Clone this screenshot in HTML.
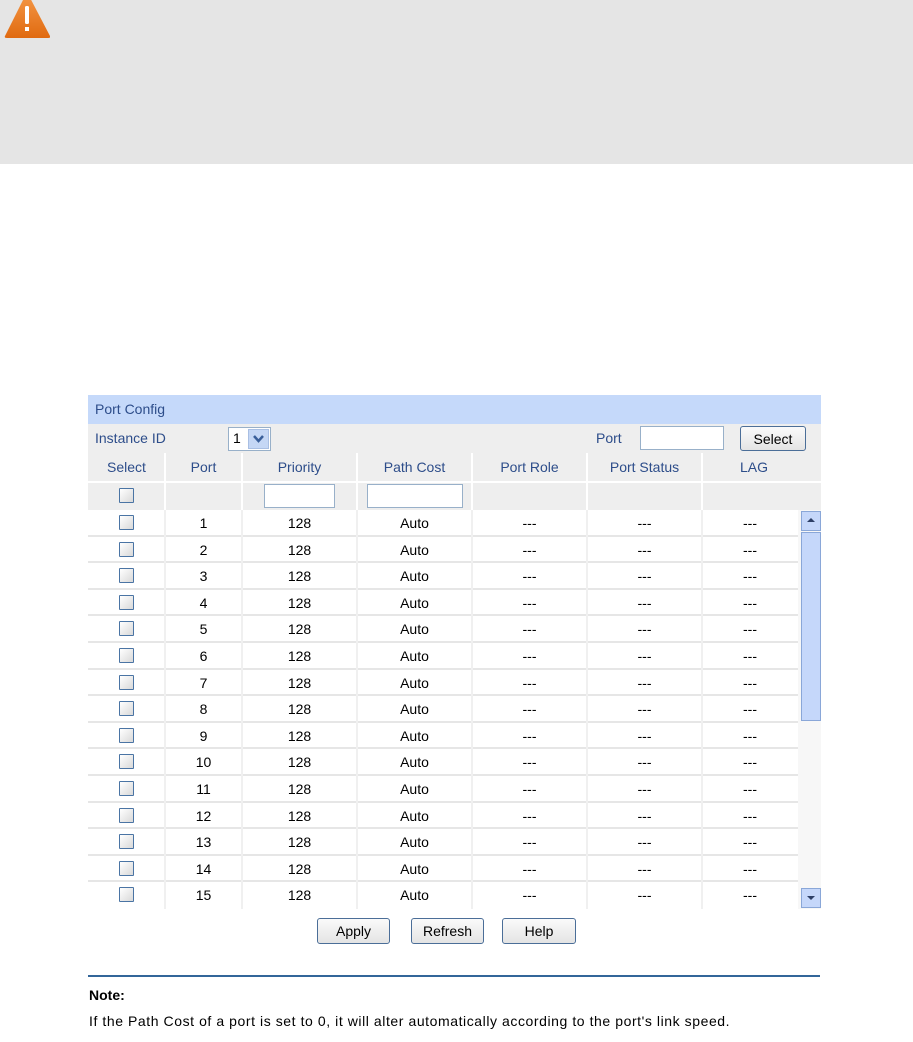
<!DOCTYPE html>
<html><head><meta charset="utf-8"><style>
*{margin:0;padding:0;box-sizing:border-box}
body{width:913px;height:1042px;background:#fff;position:relative;overflow:hidden;font-family:"Liberation Sans",Arial,sans-serif;font-size:14px;color:#000}
.a{position:absolute}
.banner{left:0;top:0;width:913px;height:164px;background:#e5e5e5}
.frame{left:88px;top:395px;width:733px;height:514px;background:#eeeeee}
.hdr{left:88px;top:395px;width:733px;height:29px;background:#c5d9fa;color:#2d4d8a;padding:6px 0 0 7px;font-size:14px}
.lbl{color:#2d4d8a;font-size:14px}
.row{position:absolute;left:88px;width:710px;height:26.6px;background:#fff;border-bottom:2px solid #e6e6e6}
.c{position:absolute;top:0;height:100%;text-align:center;line-height:26px;font-size:14px}
.cb{position:absolute;width:15px;height:15px;border:1.5px solid #4a74a4;background:linear-gradient(135deg,#fff,#d8d8d8);border-radius:1px}
.btn{position:absolute;height:26px;border:1.5px solid #4b6e98;border-radius:3px;background:linear-gradient(#fafafa,#e4e4e4);text-align:center;line-height:24px;font-size:14px}
.inp{position:absolute;background:#fff;border:1px solid #98b0c9}
</style></head><body>
<div class="a banner"></div>
<svg class="a" style="left:4px;top:0" width="46" height="40" viewBox="0 0 46 40">
<defs><linearGradient id="g" x1="0" y1="0" x2="0" y2="1"><stop offset="0" stop-color="#f59a4a"/><stop offset="1" stop-color="#e06a10"/></linearGradient></defs>
<path d="M23 -8 L46 36 Q47 38 44 38 L3 38 Q0 38 1 36 Z" fill="url(#g)"/>
<rect x="21" y="6" width="4" height="18" rx="1.5" fill="#fff"/><rect x="21" y="27" width="4" height="4" fill="#fff"/>
</svg>

<div class="a frame"></div>
<div class="a hdr">Port Config</div>
<div class="a lbl" style="left:95px;top:430px">Instance ID</div>
<div class="a" style="left:228px;top:427px;width:43px;height:24px;background:#fff;border:1px solid #98b0c9"></div>
<div class="a" style="left:233px;top:430px;font-size:14px">1</div>
<div class="a" style="left:248px;top:429px;width:21px;height:20px;background:#c5d7f5;border:1px solid #a9bfe3"></div>
<svg class="a" style="left:252px;top:434px" width="13" height="10"><path d="M2 2 L6.5 7 L11 2" stroke="#3a5f9a" stroke-width="2.5" fill="none"/></svg>
<div class="a lbl" style="left:596px;top:430px">Port</div>
<div class="inp" style="left:640px;top:426px;width:84px;height:24px"></div>
<div class="btn" style="left:740px;top:426px;width:66px;height:25px">Select</div>

<div class="a" style="left:88px;top:453px;width:733px;height:28px">
<div class="c lbl" style="left:0;width:77px;line-height:28px">Select</div>
<div class="c lbl" style="left:77px;width:77px;line-height:28px">Port</div>
<div class="c lbl" style="left:154px;width:115px;line-height:28px">Priority</div>
<div class="c lbl" style="left:269px;width:115px;line-height:28px">Path Cost</div>
<div class="c lbl" style="left:384px;width:115px;line-height:28px">Port Role</div>
<div class="c lbl" style="left:499px;width:115px;line-height:28px">Port Status</div>
<div class="c lbl" style="left:614px;width:104px;line-height:28px">LAG</div>
</div>
<div class="a" style="left:88px;top:481px;width:733px;height:2px;background:#fff"></div>
<div class="cb" style="left:119px;top:488px"></div>
<div class="inp" style="left:264px;top:484px;width:71px;height:24px"></div>
<div class="inp" style="left:367px;top:484px;width:96px;height:24px"></div>
<div class="a" style="left:164px;top:453px;width:2px;height:57px;background:#fff"></div>
<div class="a" style="left:241px;top:453px;width:2px;height:57px;background:#fff"></div>
<div class="a" style="left:356px;top:453px;width:2px;height:57px;background:#fff"></div>
<div class="a" style="left:471px;top:453px;width:2px;height:57px;background:#fff"></div>
<div class="a" style="left:586px;top:453px;width:2px;height:57px;background:#fff"></div>
<div class="a" style="left:701px;top:453px;width:2px;height:57px;background:#fff"></div>

<div id="rows">
<div class="row" style="top:510px"><div class="cb" style="left:31px;top:5px"></div><div class="c" style="left:77px;width:77px">1</div><div class="c" style="left:154px;width:115px">128</div><div class="c" style="left:269px;width:115px">Auto</div><div class="c" style="left:384px;width:115px">---</div><div class="c" style="left:499px;width:115px">---</div><div class="c" style="left:614px;width:96px">---</div></div>
<div class="row" style="top:536.6px"><div class="cb" style="left:31px;top:5px"></div><div class="c" style="left:77px;width:77px">2</div><div class="c" style="left:154px;width:115px">128</div><div class="c" style="left:269px;width:115px">Auto</div><div class="c" style="left:384px;width:115px">---</div><div class="c" style="left:499px;width:115px">---</div><div class="c" style="left:614px;width:96px">---</div></div>
<div class="row" style="top:563.2px"><div class="cb" style="left:31px;top:5px"></div><div class="c" style="left:77px;width:77px">3</div><div class="c" style="left:154px;width:115px">128</div><div class="c" style="left:269px;width:115px">Auto</div><div class="c" style="left:384px;width:115px">---</div><div class="c" style="left:499px;width:115px">---</div><div class="c" style="left:614px;width:96px">---</div></div>
<div class="row" style="top:589.8px"><div class="cb" style="left:31px;top:5px"></div><div class="c" style="left:77px;width:77px">4</div><div class="c" style="left:154px;width:115px">128</div><div class="c" style="left:269px;width:115px">Auto</div><div class="c" style="left:384px;width:115px">---</div><div class="c" style="left:499px;width:115px">---</div><div class="c" style="left:614px;width:96px">---</div></div>
<div class="row" style="top:616.4px"><div class="cb" style="left:31px;top:5px"></div><div class="c" style="left:77px;width:77px">5</div><div class="c" style="left:154px;width:115px">128</div><div class="c" style="left:269px;width:115px">Auto</div><div class="c" style="left:384px;width:115px">---</div><div class="c" style="left:499px;width:115px">---</div><div class="c" style="left:614px;width:96px">---</div></div>
<div class="row" style="top:643px"><div class="cb" style="left:31px;top:5px"></div><div class="c" style="left:77px;width:77px">6</div><div class="c" style="left:154px;width:115px">128</div><div class="c" style="left:269px;width:115px">Auto</div><div class="c" style="left:384px;width:115px">---</div><div class="c" style="left:499px;width:115px">---</div><div class="c" style="left:614px;width:96px">---</div></div>
<div class="row" style="top:669.6px"><div class="cb" style="left:31px;top:5px"></div><div class="c" style="left:77px;width:77px">7</div><div class="c" style="left:154px;width:115px">128</div><div class="c" style="left:269px;width:115px">Auto</div><div class="c" style="left:384px;width:115px">---</div><div class="c" style="left:499px;width:115px">---</div><div class="c" style="left:614px;width:96px">---</div></div>
<div class="row" style="top:696.2px"><div class="cb" style="left:31px;top:5px"></div><div class="c" style="left:77px;width:77px">8</div><div class="c" style="left:154px;width:115px">128</div><div class="c" style="left:269px;width:115px">Auto</div><div class="c" style="left:384px;width:115px">---</div><div class="c" style="left:499px;width:115px">---</div><div class="c" style="left:614px;width:96px">---</div></div>
<div class="row" style="top:722.8px"><div class="cb" style="left:31px;top:5px"></div><div class="c" style="left:77px;width:77px">9</div><div class="c" style="left:154px;width:115px">128</div><div class="c" style="left:269px;width:115px">Auto</div><div class="c" style="left:384px;width:115px">---</div><div class="c" style="left:499px;width:115px">---</div><div class="c" style="left:614px;width:96px">---</div></div>
<div class="row" style="top:749.4px"><div class="cb" style="left:31px;top:5px"></div><div class="c" style="left:77px;width:77px">10</div><div class="c" style="left:154px;width:115px">128</div><div class="c" style="left:269px;width:115px">Auto</div><div class="c" style="left:384px;width:115px">---</div><div class="c" style="left:499px;width:115px">---</div><div class="c" style="left:614px;width:96px">---</div></div>
<div class="row" style="top:776px"><div class="cb" style="left:31px;top:5px"></div><div class="c" style="left:77px;width:77px">11</div><div class="c" style="left:154px;width:115px">128</div><div class="c" style="left:269px;width:115px">Auto</div><div class="c" style="left:384px;width:115px">---</div><div class="c" style="left:499px;width:115px">---</div><div class="c" style="left:614px;width:96px">---</div></div>
<div class="row" style="top:802.6px"><div class="cb" style="left:31px;top:5px"></div><div class="c" style="left:77px;width:77px">12</div><div class="c" style="left:154px;width:115px">128</div><div class="c" style="left:269px;width:115px">Auto</div><div class="c" style="left:384px;width:115px">---</div><div class="c" style="left:499px;width:115px">---</div><div class="c" style="left:614px;width:96px">---</div></div>
<div class="row" style="top:829.2px"><div class="cb" style="left:31px;top:5px"></div><div class="c" style="left:77px;width:77px">13</div><div class="c" style="left:154px;width:115px">128</div><div class="c" style="left:269px;width:115px">Auto</div><div class="c" style="left:384px;width:115px">---</div><div class="c" style="left:499px;width:115px">---</div><div class="c" style="left:614px;width:96px">---</div></div>
<div class="row" style="top:855.8px"><div class="cb" style="left:31px;top:5px"></div><div class="c" style="left:77px;width:77px">14</div><div class="c" style="left:154px;width:115px">128</div><div class="c" style="left:269px;width:115px">Auto</div><div class="c" style="left:384px;width:115px">---</div><div class="c" style="left:499px;width:115px">---</div><div class="c" style="left:614px;width:96px">---</div></div>
<div class="row" style="top:882.4px;border-bottom:none"><div class="cb" style="left:31px;top:5px"></div><div class="c" style="left:77px;width:77px">15</div><div class="c" style="left:154px;width:115px">128</div><div class="c" style="left:269px;width:115px">Auto</div><div class="c" style="left:384px;width:115px">---</div><div class="c" style="left:499px;width:115px">---</div><div class="c" style="left:614px;width:96px">---</div></div>
</div>
<div class="a" style="left:164px;top:510px;width:2px;height:399px;background:#f0f0f0"></div>
<div class="a" style="left:241px;top:510px;width:2px;height:399px;background:#f0f0f0"></div>
<div class="a" style="left:356px;top:510px;width:2px;height:399px;background:#f0f0f0"></div>
<div class="a" style="left:471px;top:510px;width:2px;height:399px;background:#f0f0f0"></div>
<div class="a" style="left:586px;top:510px;width:2px;height:399px;background:#f0f0f0"></div>
<div class="a" style="left:701px;top:510px;width:2px;height:399px;background:#f0f0f0"></div>

<div class="a" style="left:798px;top:510px;width:23px;height:399px;background:#f7f7f7"></div>
<div class="a" style="left:801px;top:511px;width:20px;height:20px;background:#c5d7fa;border:1px solid #8aa7d8"></div>
<svg class="a" style="left:805px;top:516px" width="12" height="8"><path d="M2 6 L6 2 L10 6 Z" fill="#2d3f66"/></svg>
<div class="a" style="left:801px;top:532px;width:20px;height:189px;background:#c5d7fa;border:1px solid #8aa7d8"></div>
<div class="a" style="left:801px;top:888px;width:20px;height:20px;background:#c5d7fa;border:1px solid #8aa7d8"></div>
<svg class="a" style="left:805px;top:894px" width="12" height="8"><path d="M2 2 L6 6 L10 2 Z" fill="#2d3f66"/></svg>

<div class="btn" style="left:317px;top:918px;width:73px">Apply</div>
<div class="btn" style="left:411px;top:918px;width:73px">Refresh</div>
<div class="btn" style="left:502px;top:918px;width:74px">Help</div>

<div class="a" style="left:88px;top:975px;width:732px;height:2px;background:#336699"></div>
<div class="a" style="left:89px;top:987px;font-weight:bold;font-size:14px">Note:</div>
<div class="a" style="left:89px;top:1013px;font-size:14px;letter-spacing:0.57px;white-space:nowrap">If the Path Cost of a port is set to 0, it will alter automatically according to the port's link speed.</div>
</body></html>
